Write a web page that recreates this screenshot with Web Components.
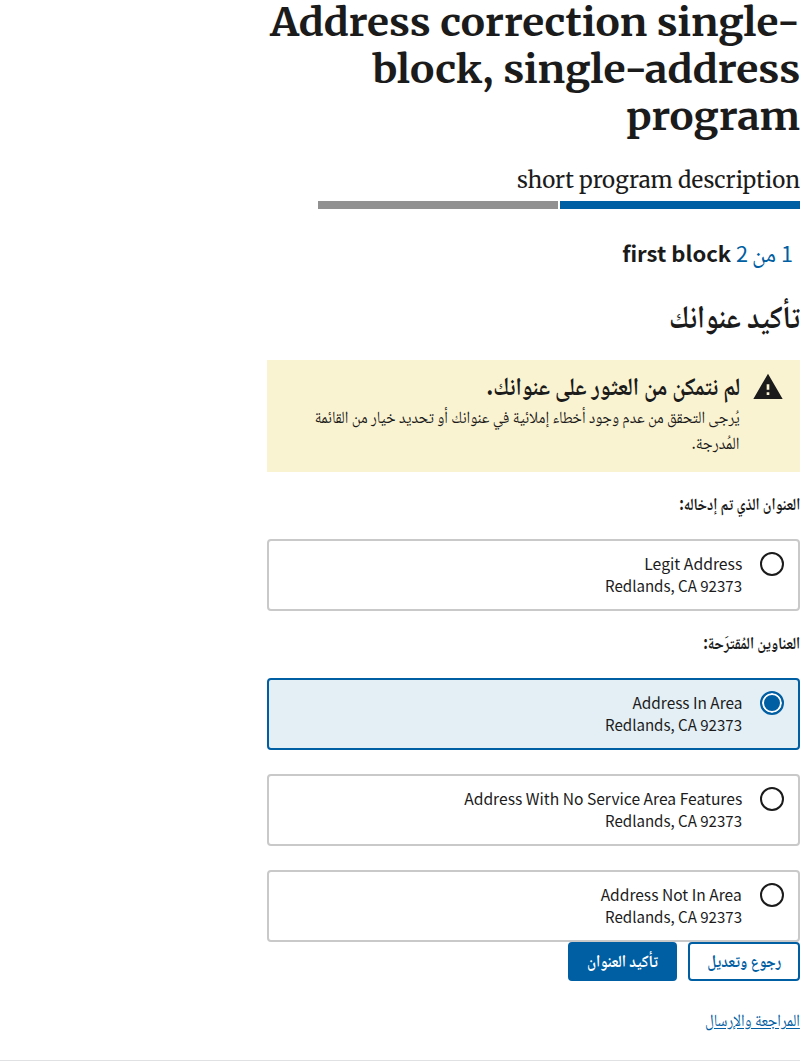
<!DOCTYPE html>
<html lang="ar" dir="rtl">
<head>
<meta charset="utf-8">
<title>تأكيد عنوانك</title>
<style>
body{margin:0;background:#fff;color:#1b1b1b;font-family:"Source Sans Pro","Noto Sans CJK SC","Noto Naskh Arabic","Noto Sans Arabic","DejaVu Sans",sans-serif;font-size:15.3px;overflow:hidden}
</style>
</head>
<body>
<address-page></address-page>
<script>
const define = (name, html, setup) => customElements.define(name, class extends HTMLElement {
  connectedCallback() {
    if (this.shadowRoot) return;
    const t = document.createElement('template');
    t.innerHTML = html;
    this.attachShadow({mode: 'open'}).append(t.content.cloneNode(true));
    if (setup) setup(this, this.shadowRoot);
  }
});

// One line of text: w = line width, h = box height, b = baseline from the top.
define('text-line', `<style>
:host{display:block;white-space:nowrap;line-height:0}
i{display:inline-block;width:0}
span{display:inline-block;transform-origin:100% 50%}
:host([dir=ltr]){text-align:right}
:host([underline]) span{text-decoration:underline;text-underline-offset:2px}
</style><i></i><span><slot></slot></span>`, (el, root) => {
  el.style.height = el.getAttribute('h') + 'px';
  root.querySelector('i').style.height = el.getAttribute('b') + 'px';
  const s = root.querySelector('span');
  const natural = s.getBoundingClientRect().width, w = +el.getAttribute('w');
  if (w && natural) s.style.transform = 'scaleX(' + w / natural + ')';
  if (el.hasAttribute('fixed')) {
    el.style.width = w + 'px';
    s.style.marginLeft = w - natural + 'px';
  }
});

define('step-progress', `<style>
:host{display:flex;gap:2px;height:8px}
div{width:240px;background:#919191}
.current{background:#005ea2}
</style><div class="current"></div><div></div>`);

define('step-heading', `<style>
:host{display:flex;padding-right:7px;height:90px;font-size:21.5px}
.n{color:#005ea2;display:flex}
.ar{margin:0 5px 0 4px;font-size:24px}
.t{font-weight:700;margin-right:5px}
</style><div class="n"><text-line w="12" h="90" b="53" fixed>1</text-line><text-line class="ar" w="24" h="90" b="53" fixed>من</text-line><text-line w="12" h="90" b="53" fixed>2</text-line></div>
<text-line class="t" dir="ltr" w="109" h="90" b="53" fixed>first block</text-line>`);

define('warning-alert', `<style>
:host{display:flex;box-sizing:border-box;height:112px;background:#faf3d1;padding-right:16px}
svg{width:32px;height:32px;margin-top:11px;flex:none}
.body{margin-right:12px}
</style><svg viewBox="0 0 24 24"><path fill="#1b1b1b" d="M1 21h22L12 2 1 21zm12-3h-2v-2h2v2zm0-4h-2v-4h2v4z"/></svg>
<div class="body"><slot></slot></div>`);

define('address-option', `<style>
:host{display:flex;box-sizing:border-box;height:72px;border:2px solid #c9c9c9;border-radius:4px;padding:11px 14px 0;background:#fff}
:host([checked]){background:#e4eff5;border-color:#005ea2}
.radio{box-sizing:border-box;width:24px;height:24px;border:2px solid #1b1b1b;border-radius:50%;flex:none;background:#fff}
:host([checked]) .radio{border-color:#005ea2;background:#005ea2;box-shadow:inset 0 0 0 2px #fff}
.body{margin-right:18px}
</style><div class="radio"></div><div class="body"><slot></slot></div>`);

define('action-button', `<style>
:host{display:flex;justify-content:center;box-sizing:border-box;height:39px;width:109px;border-radius:4px;background:#005ea2;color:#fff;font-weight:700;font-size:17px;border:2px solid #005ea2}
:host([outline]){width:112px;background:#fff;color:#005ea2}
</style><slot></slot>`);

define('address-page', `<style>
:host{display:block;height:1060px;border-bottom:1px solid #dfe1e2}
main{width:533px}
h1,h2,h3,p{margin:0;font-size:inherit;font-weight:inherit}
h1{font:700 38.8px Merriweather,"Noto Serif","DejaVu Serif","Liberation Serif",serif;height:141px}
.desc{font:21.8px Merriweather,"Noto Serif","DejaVu Serif","Liberation Serif",serif}
h2{font-weight:700;font-size:32px}
.ah{font-weight:700;font-size:25px}
.note{font-size:17px}
.label{font-weight:700;font-size:17px}
address-option + address-option{margin-top:24px}
.actions{display:flex;gap:11px}
.link{color:#005ea2;display:block;font-size:17px}
</style>
<main>
<h1><text-line dir="ltr" w="530" h="47" b="36">Address correction single-</text-line><text-line dir="ltr" w="428" h="47" b="36">block, single-address</text-line><text-line dir="ltr" w="174" h="47" b="36">program</text-line></h1>
<p class="desc"><text-line dir="ltr" w="283" h="60" b="47">short program description</text-line></p>
<step-progress></step-progress>
<step-heading></step-heading>
<h2><text-line w="131" h="61" b="29">تأكيد عنوانك</text-line></h2>
<warning-alert>
<text-line class="ah" w="254" h="45" b="35">لم نتمكن من العثور على عنوانك.</text-line>
<text-line class="note" w="425" h="26" b="18">يُرجى التحقق من عدم وجود أخطاء إملائية في عنوانك أو تحديد خيار من القائمة</text-line>
<text-line class="note" w="48" h="26" b="18">المُدرجة.</text-line>
</warning-alert>
<text-line class="label" w="121" h="67" b="38">العنوان الذي تم إدخاله:</text-line>
<address-option><text-line dir="ltr" w="98" h="22" b="18">Legit Address</text-line><text-line dir="ltr" w="137" h="22" b="18">Redlands, CA 92373</text-line></address-option>
<text-line class="label" w="97" h="67" b="38">العناوين المُقترَحة:</text-line>
<address-option checked><text-line dir="ltr" w="110" h="22" b="18">Address In Area</text-line><text-line dir="ltr" w="137" h="22" b="18">Redlands, CA 92373</text-line></address-option>
<address-option><text-line dir="ltr" w="278" h="22" b="18">Address With No Service Area Features</text-line><text-line dir="ltr" w="137" h="22" b="18">Redlands, CA 92373</text-line></address-option>
<address-option><text-line dir="ltr" w="141" h="22" b="18">Address Not In Area</text-line><text-line dir="ltr" w="137" h="22" b="18">Redlands, CA 92373</text-line></address-option>
<div class="actions"><action-button outline><text-line w="74" h="35" b="23" fixed>رجوع وتعديل</text-line></action-button><action-button><text-line w="71" h="35" b="23" fixed>تأكيد العنوان</text-line></action-button></div>
<a class="link"><text-line underline w="95" h="60" b="45">المراجعة والإرسال</text-line></a>
</main>`);
</script>
</body>
</html>
